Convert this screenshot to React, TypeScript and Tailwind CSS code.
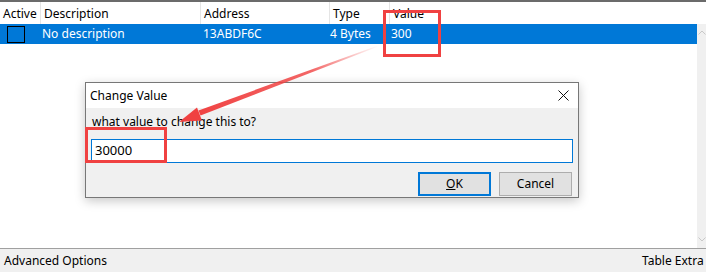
import React from "react";

const cols = [
	{ label: "Active", w: "w-[40px]" },
	{ label: "Description", w: "w-[160px]" },
	{ label: "Address", w: "w-[129px]" },
	{ label: "Type", w: "w-[60px]" },
	{ label: "Value", w: "flex-1" },
];

function Arrow() {
	// tip of the arrow sits on the label inside the dialog
	return (
		<svg className="absolute left-0 top-0 pointer-events-none" width="706" height="272" viewBox="0 0 706 272">
			<defs>
				<linearGradient id="fade" x1="378" y1="46" x2="190" y2="118" gradientUnits="userSpaceOnUse">
					<stop offset="0" stopColor="#f04141" stopOpacity="0" />
					<stop offset="0.35" stopColor="#f04141" stopOpacity="0.8" />
					<stop offset="1" stopColor="#f04141" stopOpacity="1" />
				</linearGradient>
			</defs>
			<polygon points="378,45.6 378.3,46.4 200.5,115.6 198.5,110.4" fill="url(#fade)" />
			<polygon points="179,122 197,107.6 202,120.6" fill="#f04141" />
		</svg>
	);
}

export default function App() {
	return (
		<div className="relative w-[706px] h-[272px] overflow-hidden bg-white text-[12px] text-black font-['Noto_Sans','Liberation_Sans',sans-serif]">
			<div className="flex flex-col h-full">
				<div className="h-[2px] bg-[#6b6b6b]" />

				{/* list header */}
				<div className="flex h-[22px] items-center">
					{cols.map((c, i) => (
						<div key={c.label} className={`${c.w} h-full flex items-center ${i > 0 ? "border-l border-[#e5e5e5]" : ""} pl-[3px] pt-[1px]`}>
							{c.label}
						</div>
					))}
				</div>

				{/* rows + scrollbar */}
				<div className="flex flex-1 min-h-0">
					<div className="flex-1">
						<div className="flex h-[20px] items-center bg-[#0078d7] text-white">
							<div className="w-[40px] h-full flex items-center pl-[7px]">
								<div className="w-[18px] h-[17px] border border-black" />
							</div>
							<div className="w-[160px] pl-[2px]">No description</div>
							<div className="w-[129px] pl-[3px]">13ABDF6C</div>
							<div className="w-[60px] pl-[1px]">4 Bytes</div>
							<div className="flex-1 pl-[2px]">300</div>
						</div>
					</div>
					<div className="w-[9px] bg-[#f0f0f0] flex flex-col justify-between items-center py-[6px] text-[#c8c8c8]">
						<svg width="8" height="5" viewBox="0 0 8 5"><path d="M0.5 4.5 L4 1 L7.5 4.5" fill="none" stroke="currentColor" /></svg>
						<svg width="8" height="5" viewBox="0 0 8 5"><path d="M0.5 0.5 L4 4 L7.5 0.5" fill="none" stroke="currentColor" /></svg>
					</div>
				</div>

				{/* bottom bar */}
				<div className="h-[1px] bg-[#a0a0a0]" />
				<div className="h-[23px] bg-[#f0f0f0] flex items-center justify-between pl-[4px]">
					<span>Advanced Options</span>
					<span className="w-[64px] whitespace-nowrap">Table Extra</span>
				</div>
			</div>

			{/* Change Value dialog */}
			<div className="absolute left-[85px] top-[82px] w-[494px] h-[116px] border border-[#777777] bg-[#f0f0f0] shadow-[0_3px_10px_rgba(0,0,0,0.22)] flex flex-col">
				<div className="h-[25px] bg-white flex items-center justify-between pl-[4px] pr-[9px]">
					<span>Change Value</span>
					<svg width="11" height="11" viewBox="0 0 11 11">
						<path d="M0.5 0.5 L10.5 10.5 M10.5 0.5 L0.5 10.5" stroke="#111" strokeWidth="1" />
					</svg>
				</div>
				<div className="flex flex-col px-[5px] pt-[5px]">
					<div className="pl-[1px] h-[17px] leading-[17px]">what value to change this to?</div>
					<div className="mt-[9px] h-[24px] border border-[#0078d7] bg-white flex items-center pl-[3px] text-[13px]">30000</div>
					<div className="mt-[9px] flex justify-end gap-[8px] pr-[1px]">
						<div className="w-[73px] h-[24px] border-2 border-[#0078d7] bg-[#e1e1e1] flex items-center justify-center">
							<span><span className="underline">O</span>K</span>
						</div>
						<div className="w-[73px] h-[24px] border border-[#adadad] bg-[#e1e1e1] flex items-center justify-center">
							Cancel
						</div>
					</div>
				</div>
			</div>

			{/* annotations */}
			<div className="absolute left-[383px] top-[10px] w-[58px] h-[47px] border-[3px] border-[#f04141]" />
			<div className="absolute left-[85px] top-[127px] w-[82px] h-[36px] border-[3px] border-[#f04141]" />
			<Arrow />
		</div>
	);
}
